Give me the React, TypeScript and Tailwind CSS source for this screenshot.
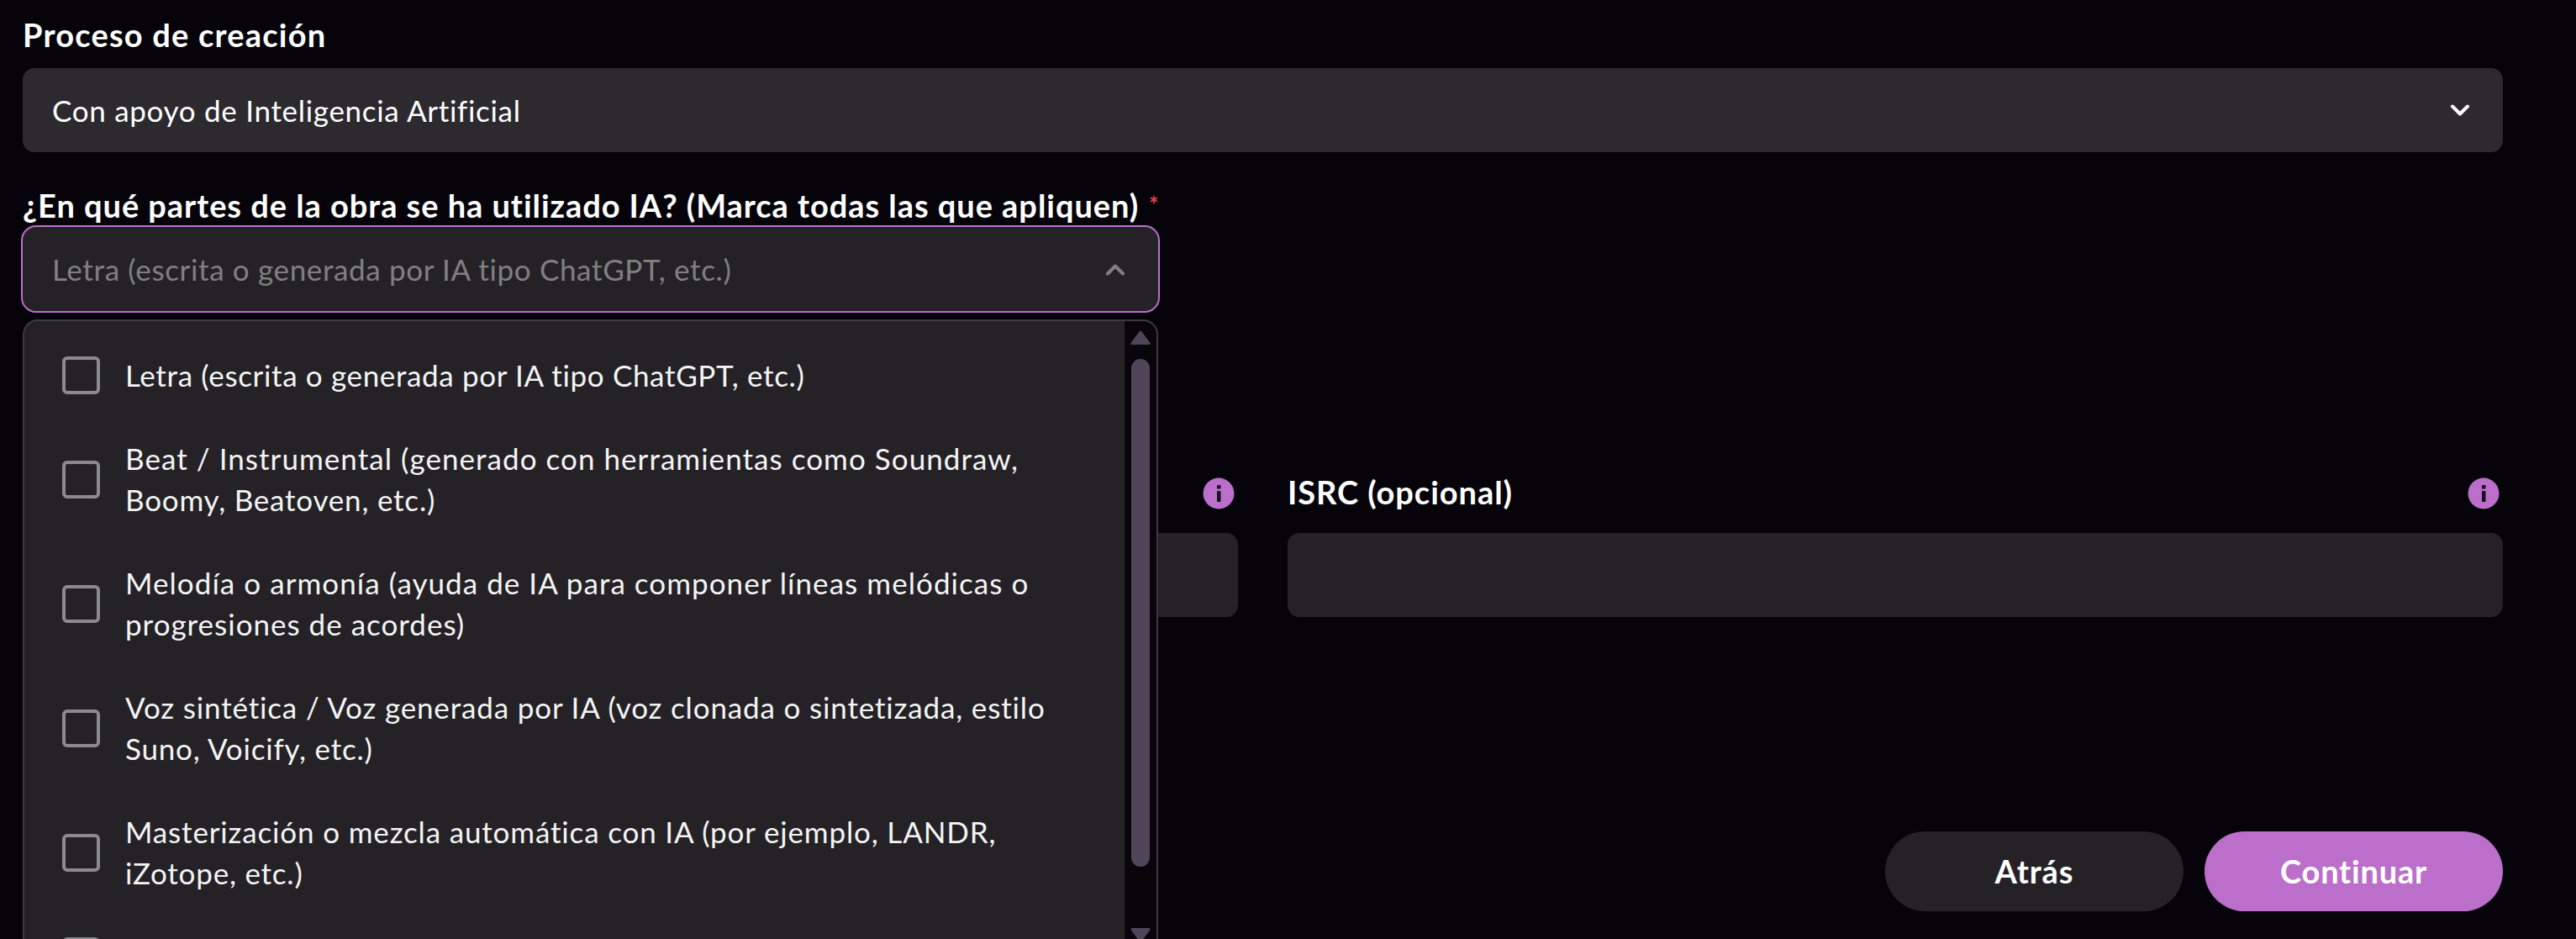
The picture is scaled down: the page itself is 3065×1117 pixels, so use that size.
import React from "react";

const rows: { text: string; cls: string }[][] = [
  [{ text: "Letra (escrita o generada por IA tipo ChatGPT, etc.)", cls: "tracking-[0.65px]" }],
  [
    { text: "Beat / Instrumental (generado con herramientas como Soundraw,", cls: "tracking-[1.05px]" },
    { text: "Boomy, Beatoven, etc.)", cls: "tracking-[0.8px]" },
  ],
  [
    { text: "Melodía o armonía (ayuda de IA para componer líneas melódicas o", cls: "tracking-[1.05px]" },
    { text: "progresiones de acordes)", cls: "tracking-[1px]" },
  ],
  [
    { text: "Voz sintética / Voz generada por IA (voz clonada o sintetizada, estilo", cls: "tracking-[0.85px]" },
    { text: "Suno, Voicify, etc.)", cls: "tracking-[0.8px]" },
  ],
  [
    { text: "Masterización o mezcla automática con IA (por ejemplo, LANDR,", cls: "tracking-[0.85px]" },
    { text: "iZotope, etc.)", cls: "tracking-[0.8px]" },
  ],
];

function Chevron({ up, color }: { up?: boolean; color: string }) {
  return (
    <svg width="24" height="15" viewBox="0 0 24 15" fill="none" className="shrink-0">
      <path d={up ? "M3 12.5 L12 3.5 L21 12.5" : "M3 2.5 L12 11.5 L21 2.5"} stroke={color} strokeWidth="4" strokeLinecap="round" strokeLinejoin="round" />
    </svg>
  );
}

function Info() {
  return (
    <svg width="38" height="38" viewBox="0 0 38 38" className="shrink-0">
      <circle cx="19" cy="19" r="18.5" fill="#bb6fcb" />
      <rect x="17" y="9" width="4.5" height="4.5" rx="1" fill="#1a1020" />
      <rect x="17" y="16" width="4.5" height="13" rx="1" fill="#1a1020" />
    </svg>
  );
}

export default function App() {
  return (
    <div className="h-[1117px] overflow-hidden bg-[#06040a] px-[27px] pr-[87px] pt-[17px] font-['Lato',sans-serif] text-white">
      <div className="h-[48px] text-[38px] font-bold leading-[48px] tracking-[1.2px]">Proceso de creación</div>
      <div className="mt-[16px] flex h-[100px] items-center justify-between rounded-[14px] bg-[#2c2a2f] pl-[35px] pr-[39px] text-[35px] tracking-[0.7px]">
        <span>Con apoyo de Inteligencia Artificial</span>
        <Chevron color="#ffffff" />
      </div>

      <div className="mt-[39px] flex h-[48px] items-start text-[38px] font-bold leading-[48px] tracking-[0.95px] whitespace-nowrap">
        ¿En qué partes de la obra se ha utilizado IA? (Marca todas las que apliquen)
        <span className="ml-[12px] text-[26px] leading-[46px] text-[#e5484d]">*</span>
      </div>

      <div className="relative mt-[2px] w-[1351px]">
        <div className="flex h-[100px] items-center justify-between rounded-[16px] bg-[#252227] pl-[35px] pr-[39px] text-[35px] tracking-[0.65px] text-[#808080] outline-2 outline-[#bb6fcb]">
          <span>Letra (escrita o generada por IA tipo ChatGPT, etc.)</span>
          <Chevron up color="#808080" />
        </div>

        <div className="absolute left-0 top-[110px] z-10 flex h-[900px] w-[1351px] overflow-hidden rounded-[18px] border-2 border-[#3d3a40] bg-[#252227]">
          <div className="flex-1 pt-[15px]">
            {rows.map((lines) => (
              <div key={lines[0].text} className="flex items-center gap-[31px] py-[25px] pl-[45px]">
                <div className="h-[45px] w-[45px] shrink-0 rounded-[6px] border-[4px] border-[#8b8b8b]" />
                <div className="-ml-[1px] text-[35px] leading-[49px] whitespace-nowrap text-[#f4f4f4]">
                  {lines.map((l) => (
                    <div key={l.text} className={l.cls}>{l.text}</div>
                  ))}
                </div>
              </div>
            ))}
            <div className="flex h-[99px] items-center pl-[45px]">
              <div className="h-[45px] w-[45px] shrink-0 rounded-[6px] border-[4px] border-[#8b8b8b]" />
            </div>
          </div>
          <div className="flex w-[38px] shrink-0 flex-col items-center bg-[#08060b] pt-[11px]">
            <svg width="24" height="18" viewBox="0 0 24 18" className="shrink-0">
              <path d="M12 2 L22 15.5 H2 Z" fill="#51455a" stroke="#51455a" strokeWidth="3" strokeLinejoin="round" />
            </svg>
            <div className="mt-[16px] h-[604px] w-[22px] shrink-0 rounded-full bg-[#51455a]" />
            <svg width="24" height="18" viewBox="0 0 24 18" className="mt-[72px] shrink-0">
              <path d="M12 16 L22 2.5 H2 Z" fill="#51455a" stroke="#51455a" strokeWidth="3" strokeLinejoin="round" />
            </svg>
          </div>
        </div>
      </div>

      <div className="mt-[193px] grid grid-cols-2 gap-[59px]">
        <div>
          <div className="flex h-[48px] items-center justify-end pr-[4px]">
            <Info />
          </div>
          <div className="mt-[23px] h-[100px] rounded-[14px] bg-[#252227]" />
        </div>
        <div>
          <div className="flex h-[48px] items-center justify-between pr-[4px]">
            <span className="mb-[3px] text-[38px] font-bold leading-[45px] tracking-[0.95px]">ISRC (opcional)</span>
            <Info />
          </div>
          <div className="mt-[23px] h-[100px] rounded-[14px] bg-[#252227]" />
        </div>
      </div>

      <div className="mt-[255px] flex justify-end gap-[25px]">
        <button className="h-[95px] w-[355px] rounded-full bg-[#252227] text-[38px] font-bold tracking-[0.9px] text-white">Atrás</button>
        <button className="h-[95px] w-[355px] rounded-full bg-[#bb6fcb] text-[38px] font-bold tracking-[0.8px] text-white">Continuar</button>
      </div>
    </div>
  );
}
